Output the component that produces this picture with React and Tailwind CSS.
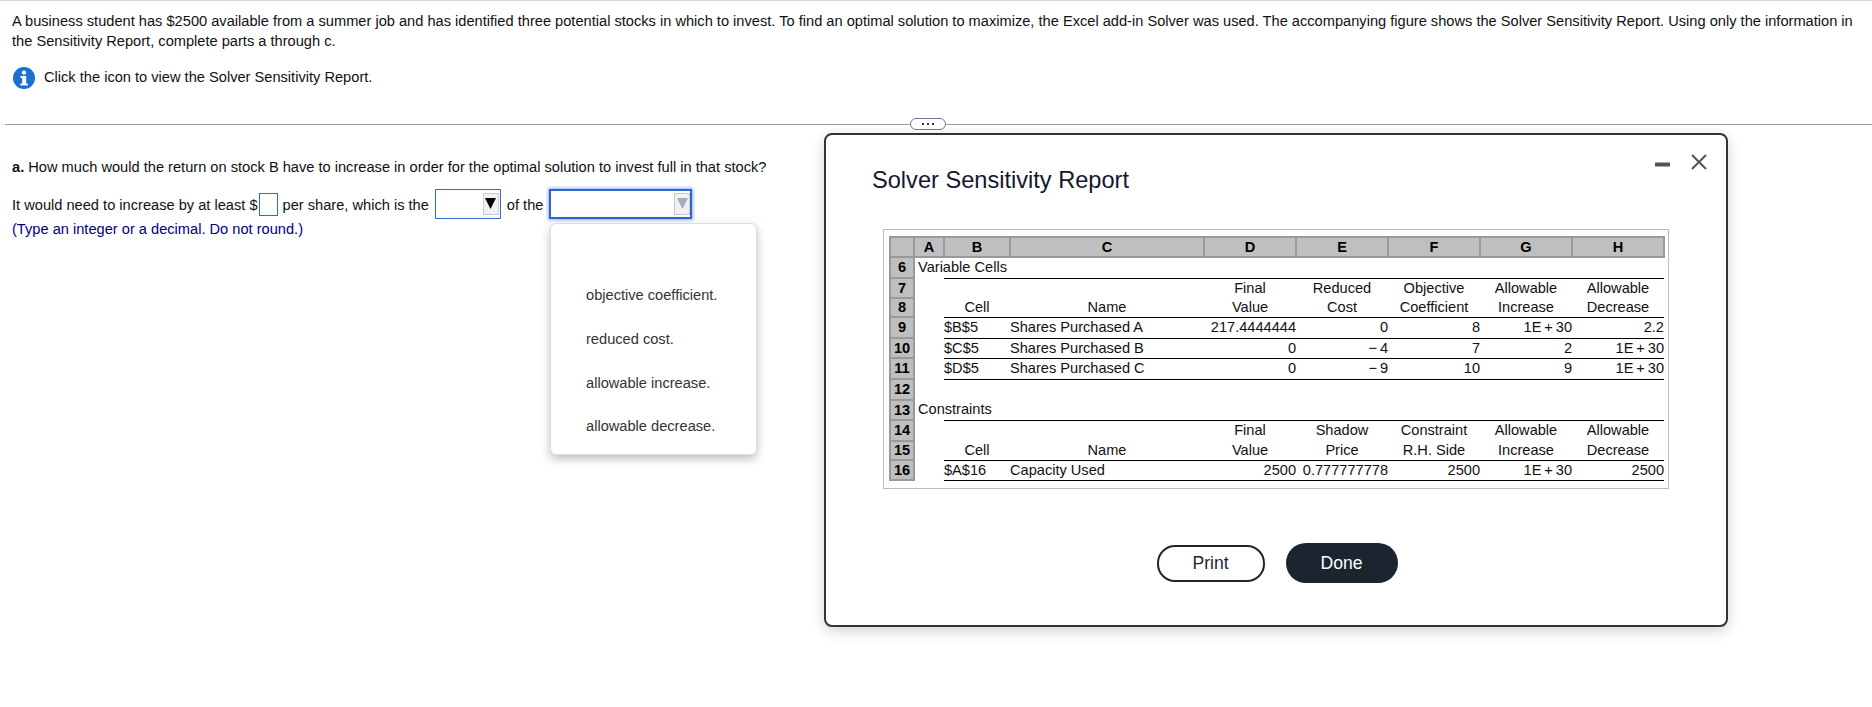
const columns = ['A', 'B', 'C', 'D', 'E', 'F', 'G', 'H']

const big = '1E\u2009+\u200930'

// B to H for each sheet row, with c = centered, l = left, r = right
const rows = [
  { n: 6, h: 'h-[21px]', title: 'Variable Cells' },
  { n: 7, h: 'h-[20px]', line: true, cells: [['c', ''], ['c', ''], ['c', 'Final'], ['c', 'Reduced'], ['c', 'Objective'], ['c', 'Allowable'], ['c', 'Allowable']] },
  { n: 8, h: 'h-[19px]', cells: [['c', 'Cell'], ['c', 'Name'], ['c', 'Value'], ['c', 'Cost'], ['c', 'Coefficient'], ['c', 'Increase'], ['c', 'Decrease']] },
  { n: 9, h: 'h-[21px]', line: true, cells: [['l', '$B$5'], ['l', 'Shares Purchased A'], ['r', '217.4444444'], ['r', '0'], ['r', '8'], ['r', big], ['r', '2.2']] },
  { n: 10, h: 'h-[20px]', line: true, cells: [['l', '$C$5'], ['l', 'Shares Purchased B'], ['r', '0'], ['r', '\u2212\u20094'], ['r', '7'], ['r', '2'], ['r', big]] },
  { n: 11, h: 'h-[21px]', line: true, bottom: true, cells: [['l', '$D$5'], ['l', 'Shares Purchased C'], ['r', '0'], ['r', '\u2212\u20099'], ['r', '10'], ['r', '9'], ['r', big]] },
  { n: 12, h: 'h-[21px]' },
  { n: 13, h: 'h-[20px]', title: 'Constraints' },
  { n: 14, h: 'h-[21px]', line: true, cells: [['c', ''], ['c', ''], ['c', 'Final'], ['c', 'Shadow'], ['c', 'Constraint'], ['c', 'Allowable'], ['c', 'Allowable']] },
  { n: 15, h: 'h-[19px]', cells: [['c', 'Cell'], ['c', 'Name'], ['c', 'Value'], ['c', 'Price'], ['c', 'R.H. Side'], ['c', 'Increase'], ['c', 'Decrease']] },
  { n: 16, h: 'h-[20px]', line: true, bottom: true, cells: [['l', '$A$16'], ['l', 'Capacity Used'], ['r', '2500'], ['r', '0.777777778'], ['r', '2500'], ['r', big], ['r', '2500']] },
]

const options = ['objective coefficient.', 'reduced cost.', 'allowable increase.', 'allowable decrease.']

function InfoIcon() {
  return (
    <svg width="22" height="22" viewBox="0 0 22 22" className="ml-px mr-[9px] shrink-0">
      <circle cx="11" cy="11" r="11" fill="#1a6fd1" />
      <circle cx="11" cy="5.6" r="2.2" fill="#fff" />
      <path d="M7.6 9h5.6v7.6h1.6v2H7.4v-2h1.8v-5.6H7.6z" fill="#fff" />
    </svg>
  )
}

function SelectBox({ faded, focused, width }) {
  return (
    <div
      className={`flex h-[30px] shrink-0 items-center justify-end bg-white ${width} ${
        focused ? 'border-2 border-[#2f66cc] shadow-[0_0_3px_1px_#8fb0ea]' : 'border border-[#2f6bd0] pr-px'
      }`}
    >
      <div className="flex h-[22px] w-[16px] items-start justify-center border border-[#cbcbcb] bg-[#f1f1f1] pt-[4px]">
        <svg width="11" height="11" viewBox="0 0 11 11">
          <path d="M0 0h11L5.5 11z" fill={faded ? '#a3adc2' : '#000'} />
        </svg>
      </div>
    </div>
  )
}

function HeaderCell({ children }) {
  return (
    <td className="border-2 border-[#999] bg-[#bfbfbf] p-0 text-center font-bold text-black">
      {children}
    </td>
  )
}

function ReportTable() {
  return (
    <table className="w-[774px] table-fixed border-collapse text-[14.6px] leading-none text-[#111]">
      <colgroup>
        <col className="w-[24px]" />
        <col className="w-[30px]" />
        <col className="w-[66px]" />
        <col className="w-[194px]" />
        <col className="w-[92px]" />
        <col className="w-[92px]" />
        <col className="w-[92px]" />
        <col className="w-[92px]" />
        <col className="w-[92px]" />
      </colgroup>
      <tbody>
        <tr className="h-[20px]">
          <HeaderCell />
          {columns.map((name) => (
            <HeaderCell key={name}>{name}</HeaderCell>
          ))}
        </tr>
        {rows.map((row) => (
          <tr key={row.n} className={row.h}>
            <HeaderCell>{row.n}</HeaderCell>
            {row.title && (
              <td colSpan={8} className="whitespace-nowrap p-0 pl-[3px]">
                {row.title}
              </td>
            )}
            {!row.title && <td className="p-0" />}
            {row.cells &&
              row.cells.map(([align, text], i) => (
                <td
                  key={i}
                  className={`whitespace-nowrap p-0 ${row.line ? 'border-t border-black' : ''} ${row.bottom ? 'border-b border-black' : ''} ${
                    align === 'c' ? 'text-center' : align === 'l' ? 'text-left' : 'text-right'
                  }`}
                >
                  {text}
                </td>
              ))}
            {!row.title && !row.cells && <td colSpan={7} className="p-0" />}
          </tr>
        ))}
      </tbody>
    </table>
  )
}

function ReportModal() {
  return (
    <div className="absolute left-[824px] top-[133px] h-[494px] w-[904px] rounded-lg border-2 border-[#333] bg-white shadow-[0_4px_14px_rgba(0,0,0,0.18)]">
      <div className="absolute right-[19px] top-[19px] flex items-start gap-[21px]">
        <svg width="15" height="16" viewBox="0 0 15 16">
          <rect x="0" y="8.5" width="15" height="4" rx="0.5" fill="#4b5563" />
        </svg>
        <svg width="16" height="16" viewBox="0 0 16 16">
          <path d="M1 1l14 14M15 1L1 15" stroke="#4b5563" strokeWidth="2" fill="none" />
        </svg>
      </div>
      <h2 className="pl-[46px] pt-[31px] text-[23.6px] leading-[28px] font-normal text-[#15172f]">Solver Sensitivity Report</h2>
      <div className="ml-[57px] mt-[35px] w-[786px] border border-[#bbb] pb-[7px] pl-[5px] pr-[5px] pt-[6px]">
        <ReportTable />
      </div>
      <div className="mt-[54px] flex items-center justify-center gap-[21px] pl-[2px]">
        <button className="h-[37px] w-[108px] rounded-[18px] border-2 border-[#1f2533] bg-white text-[17.6px] text-[#1f2533]">Print</button>
        <button className="h-[40px] w-[112px] rounded-[20px] bg-[#1c2430] text-[17.6px] text-white">Done</button>
      </div>
    </div>
  )
}

export default function App() {
  return (
    <div className='relative h-[707px] overflow-hidden bg-white font-["Liberation_Sans",Arial,sans-serif] text-[14.63px] leading-[19px] text-[#111]'>
      <div className="h-px bg-[#cfd6e2]" />
      <div className="px-3 pt-[10px]">
        <p className="leading-[20px]">
          A business student has $2500 available from a summer job and has identified three potential stocks in which to invest. To find an optimal solution to maximize, the Excel add-in Solver was used. The accompanying figure shows the Solver Sensitivity Report. Using only the information in the Sensitivity Report, complete parts a through c.
        </p>
        <div className="mt-[16px] flex items-center">
          <InfoIcon />
          <span className="mb-[2px]">Click the icon to view the Solver Sensitivity Report.</span>
        </div>
      </div>

      <div className="relative ml-[5px] mt-[35px] h-px bg-[#9a9ea6]">
        <div className="absolute left-[905px] top-[-6px] flex h-[12px] w-[36px] items-center justify-center gap-[3px] rounded-full border border-[#6b7a90] bg-white">
          <span className="h-[2px] w-[2px] bg-[#333]" />
          <span className="h-[2px] w-[2px] bg-[#333]" />
          <span className="h-[2px] w-[2px] bg-[#333]" />
        </div>
      </div>

      <div className="px-3 pt-[33px]">
        <p>
          <b>a.</b> How much would the return on stock B have to increase in order for the optimal solution to invest full in that stock?
        </p>
        <div className="mt-[12px] flex items-center">
          <span className="pt-[2px]">It would need to increase by at least $</span>
          <div className="ml-px mr-[5px] h-[23px] w-[19px] shrink-0 border border-[#2f6bd0]" />
          <span className="pt-[2px]">per share, which is the</span>
          <div className="ml-[6px]">
            <SelectBox width="w-[66px]" />
          </div>
          <span className="ml-[6px] pt-[2px]">of the</span>
          <div className="ml-[6px]">
            <SelectBox faded focused width="w-[143px]" />
          </div>
        </div>
        <p className="mt-px text-[#000080]">(Type an integer or a decimal. Do not round.)</p>
      </div>

      <div className="absolute left-[550px] top-[223px] h-[232px] w-[207px] rounded-md border border-[#ddd] bg-white pl-[35px] pt-[50px] text-[#333] shadow-[0_4px_10px_rgba(0,0,0,0.25)]">
        {options.map((option) => (
          <div key={option} className="flex h-[43.7px] items-center">
            {option}
          </div>
        ))}
      </div>

      <ReportModal />
    </div>
  )
}
